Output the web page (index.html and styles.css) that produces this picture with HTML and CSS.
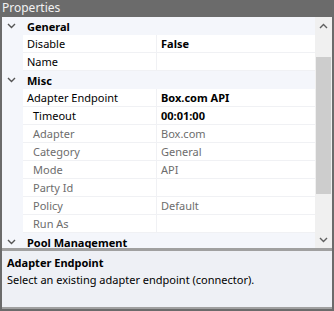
FILE: index.html
```html
<!DOCTYPE html>
<html lang="en">
<head>
    <meta charset="UTF-8">
    <title>Properties</title>
    <link rel="stylesheet" href="styles.css">
</head>
<body>
    <div class="title">Properties</div>
    <div class="frame">
        <div class="grid">
            <div class="rows">
                <div class="category">
                    <span class="toggle"><svg width="9" height="6" viewBox="0 0 9 6"><path d="M1 1 L4.5 4.5 L8 1" fill="none" stroke="#555" stroke-width="1.4"/></svg></span>
                    <span class="label">General</span>
                </div>
                <div class="prop">
                    <span class="margin"></span>
                    <span class="name">Disable</span>
                    <span class="value bold">False</span>
                </div>
                <div class="prop">
                    <span class="margin"></span>
                    <span class="name">Name</span>
                    <span class="value"></span>
                </div>
                <div class="category">
                    <span class="toggle"><svg width="9" height="6" viewBox="0 0 9 6"><path d="M1 1 L4.5 4.5 L8 1" fill="none" stroke="#555" stroke-width="1.4"/></svg></span>
                    <span class="label">Misc</span>
                </div>
                <div class="prop">
                    <span class="margin"></span>
                    <span class="name">Adapter Endpoint</span>
                    <span class="value bold">Box.com API</span>
                </div>
                <div class="prop sub">
                    <span class="margin"></span>
                    <span class="name">Timeout</span>
                    <span class="value bold">00:01:00</span>
                </div>
                <div class="prop sub disabled">
                    <span class="margin"></span>
                    <span class="name">Adapter</span>
                    <span class="value">Box.com</span>
                </div>
                <div class="prop sub disabled">
                    <span class="margin"></span>
                    <span class="name">Category</span>
                    <span class="value">General</span>
                </div>
                <div class="prop sub disabled">
                    <span class="margin"></span>
                    <span class="name">Mode</span>
                    <span class="value">API</span>
                </div>
                <div class="prop sub disabled">
                    <span class="margin"></span>
                    <span class="name">Party Id</span>
                    <span class="value"></span>
                </div>
                <div class="prop sub disabled">
                    <span class="margin"></span>
                    <span class="name">Policy</span>
                    <span class="value">Default</span>
                </div>
                <div class="prop sub disabled">
                    <span class="margin"></span>
                    <span class="name">Run As</span>
                    <span class="value"></span>
                </div>
                <div class="category">
                    <span class="toggle"><svg width="9" height="6" viewBox="0 0 9 6"><path d="M1 1 L4.5 4.5 L8 1" fill="none" stroke="#555" stroke-width="1.4"/></svg></span>
                    <span class="label">Pool Management</span>
                </div>
            </div>
            <div class="scrollbar">
                <span class="arrow"><svg width="9" height="6" viewBox="0 0 9 6"><path d="M1 5 L4.5 1.5 L8 5" fill="none" stroke="#606060" stroke-width="1.4"/></svg></span>
                <div class="track"><div class="thumb"></div></div>
                <span class="arrow"><svg width="9" height="6" viewBox="0 0 9 6"><path d="M1 1 L4.5 4.5 L8 1" fill="none" stroke="#606060" stroke-width="1.4"/></svg></span>
            </div>
        </div>
        <div class="description">
            <div class="desc-title">Adapter Endpoint</div>
            <div class="desc-text">Select an existing adapter endpoint (connector).</div>
        </div>
    </div>
</body>
</html>
```

FILE: styles.css
```css
body {
    margin: 0;
    background-color: #6b6b6b;
    font-family: "Noto Sans", "DejaVu Sans", sans-serif;
    font-size: 11px;
    width: 334px;
    height: 311px;
    overflow: hidden;
}
.title {
    height: 17px;
    line-height: 16px;
    padding-left: 2px;
    font-size: 12px;
    color: #f2f2f2;
}
.frame {
    margin: 0 2px 0 2px;
    height: 292px;
    display: flex;
    flex-direction: column;
    background-color: #a0a0a0;
}
.grid {
    display: flex;
    height: 231px;
    background-color: #ffffff;
}
.rows {
    flex: 1;
    overflow: hidden;
}
.category {
    display: flex;
    align-items: center;
    height: 18px;
    background-color: #f4f6fb;
    font-weight: bold;
    color: #000;
}
.toggle {
    width: 21px;
    display: flex;
    justify-content: center;
    padding-right: 2px;
    box-sizing: border-box;
}
.label {
    padding-left: 4px;
}
.prop {
    display: grid;
    grid-template-columns: 21px 134px 1fr;
    height: 18px;
    color: #000;
}
.prop .margin {
    background-color: #f4f6fb;
}
.prop .name,
.prop .value {
    line-height: 17px;
    border-bottom: 1px solid #f0f1f4;
    white-space: nowrap;
    overflow: hidden;
}
.prop .name {
    padding-left: 4px;
    border-right: 1px solid #f0f1f4;
}
.prop .value {
    padding-left: 4px;
}
.sub .name {
    padding-left: 10px;
}
.disabled {
    color: #6d6d6d;
}
.bold {
    font-weight: bold;
    color: #000;
}
.scrollbar {
    width: 17px;
    background-color: #f0f0f0;
    display: flex;
    flex-direction: column;
}
.arrow {
    height: 17px;
    display: flex;
    align-items: center;
    justify-content: center;
}
.track {
    flex: 1;
    padding: 23px 1px 0 1px;
}
.thumb {
    height: 137px;
    background-color: #cdcdcd;
}
.description {
    margin-top: 2px;
    border-top: 1px solid #a0a0a0;
    flex: 1;
    background-color: #eef0f5;
    padding: 3px 0 0 5px;
    margin-bottom: 2px;
    color: #000;
}
.desc-title {
    font-weight: bold;
    line-height: 17px;
}
.desc-text {
    line-height: 18px;
}
```
